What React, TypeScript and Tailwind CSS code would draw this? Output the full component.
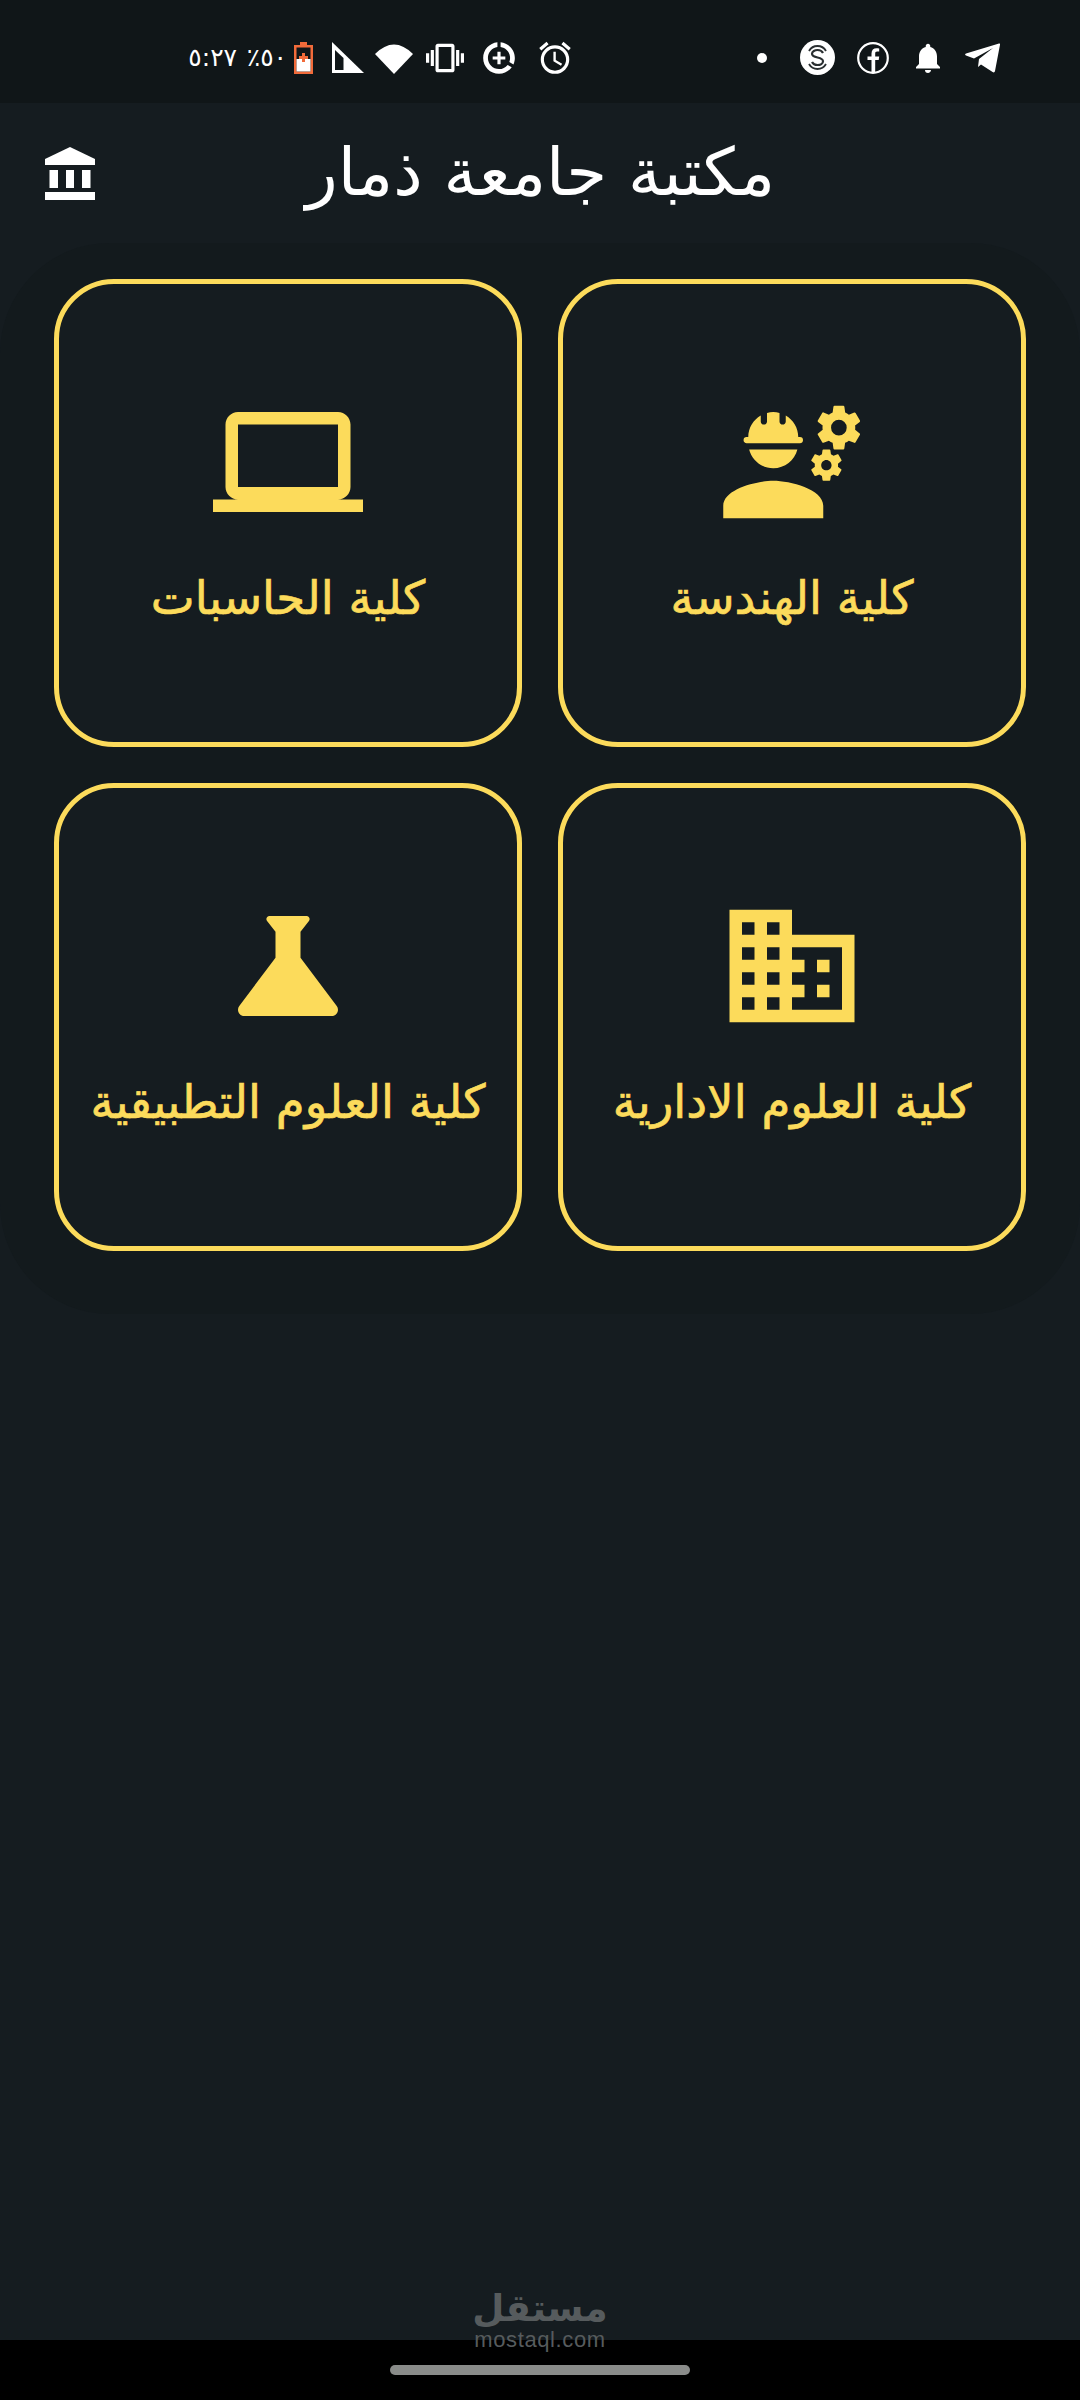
import {
  MdBusiness,
  MdDataSaverOn,
  MdEngineering,
  MdLaptop,
  MdNotifications,
  MdOutlineAlarm,
  MdScience,
  MdVibration,
} from "react-icons/md";
import type { ReactNode } from "react";

const faculties: { title: string; icon: ReactNode }[] = [
  { title: "كلية الهندسة", icon: <MdEngineering size={150} /> },
  { title: "كلية الحاسبات", icon: <MdLaptop size={150} /> },
  { title: "كلية العلوم الادارية", icon: <MdBusiness size={150} /> },
  { title: "كلية العلوم التطبيقية", icon: <MdScience size={150} /> },
];

function StatusBar() {
  return (
    <div className="flex h-[103px] items-center bg-[#101618] pl-[189px] pt-[12px] text-white">
      <span dir="rtl" className="w-[48px] text-[25px] leading-none">٥:٢٧</span>
      <span dir="rtl" className="ml-[14px] w-[36px] text-[25px] leading-none">٥٠٪</span>

      {/* Battery */}
      <svg viewBox="0 0 19 32" className="ml-[7px] h-[32px] w-[19px]">
        <path d="M6 0h7v3h6v29H0V3h6z" fill="#f26b3a" />
        <rect x="2.5" y="5.5" width="14" height="24" fill="#101618" />
        <rect x="2.5" y="17" width="14" height="12.5" fill="#fff" />
        <path d="M8 11h3v3h3v3h-3v3H8v-3H5v-3h3z" fill="#f26b3a" />
      </svg>

      {/* Signal */}
      <svg viewBox="0 0 32 31" className="ml-[19px] h-[31px] w-[32px]">
        <path d="M0 0l32 31H0z" fill="#fff" />
        <path d="M3 8v20h8.5V16z" fill="#101618" />
      </svg>

      {/* Wifi */}
      <svg viewBox="0 0 38 32" className="ml-[11px] h-[32px] w-[38px]">
        <path d="M0 12Q19-7 38 12L19 32z" fill="#fff" />
      </svg>

      <MdVibration size={38} className="ml-[13px]" />
      <MdDataSaverOn size={38} className="ml-[16px]" />
      <MdOutlineAlarm size={38} className="ml-[18px]" />

      <span className="ml-[183px] h-[10px] w-[10px] rounded-full bg-white" />

      {/* Sweatcoin style logo */}
      <svg viewBox="0 0 35 35" className="ml-[33px] h-[35px] w-[35px]">
        <circle cx="17.5" cy="17.5" r="17.5" fill="#fff" />
        <path d="M23 13c-1-2-3-3-5.500-3S12 11.500 12 13.800c0 5 11 2.500 11 7.400 0 2.300-2.500 3.800-5.500 3.800S13 24 12 22" fill="none" stroke="#2a2f31" strokeWidth="2.200" />
        <path d="M9 11c2-3.500 5-5 8.500-5S24 7.500 26 11M9 24c2 3.500 5 5 8.500 5s6.500-1.500 8.500-5" fill="none" stroke="#2a2f31" strokeWidth="1.800" />
      </svg>

      {/* Facebook outline */}
      <svg viewBox="0 0 32 32" className="ml-[22px] h-[32px] w-[32px]">
        <circle cx="16" cy="16" r="14.800" fill="none" stroke="#fff" strokeWidth="2.200" />
        <path d="M14.500 31V18h-4v-3.500h4V11.500c0-3.500 2-5.300 5-5.300 1.300 0 2.300.1 2.700.2v3.200h-2c-1.600 0-2 .8-2 2v2.900h4l-.5 3.500h-3.500v13z" fill="#fff" />
      </svg>

      <MdNotifications size={36} className="ml-[21px]" />

      {/* Telegram */}
      <svg viewBox="0 0 35 30" className="ml-[19px] h-[30px] w-[35px]">
        <path d="M34 0.500c.8-.2 1.300.4 1 1.300L30 28c-.2 1.300-1.300 1.800-2.400 1L16 21.500l-3 2.500 1-8L28 5 9 15.500 1 12.500c-1.200-.5-1.200-1.500 0-2z" fill="#fff" />
      </svg>
    </div>
  );
}

function Header() {
  return (
    <div className="flex h-[140px] items-center justify-between pl-[45px] pr-[305px]">
      <svg viewBox="0 0 50 53" className="h-[53px] w-[50px]" fill="#fff">
        <path d="M25 0l25 12v6H0v-6z" />
        <path d="M4.500 23H13v18H4.500zM21 23h8v18h-8zM37 23h8.500v18H37zM0 45h50v8H0z" />
      </svg>
      <h1 dir="rtl" className="text-[66px] leading-none text-white">مكتبة جامعة ذمار</h1>
    </div>
  );
}

function FacultyCard({ title, icon }: { title: string; icon: ReactNode }) {
  return (
    <div className="flex h-[468px] flex-col items-center justify-center rounded-[60px] border-[5px] border-[#fcdb5b] bg-[#151c20] pb-[11px] text-[#fcdb5b]">
      {icon}
      <span dir="rtl" className="mt-[31px] text-[46.7px] leading-[60px] [-webkit-text-stroke:0.7px_#fcdb5b]">{title}</span>
    </div>
  );
}

export default function App() {
  return (
    <main
      className="relative flex h-[2400px] w-[1080px] flex-col overflow-hidden bg-[#151c20]"
      style={{ fontFamily: '"DejaVu Sans", "Noto Sans", serif' }}
    >
      <StatusBar />
      <Header />

      {/* Faculties */}
      <div className="grid grid-cols-2 gap-[36px] rounded-[110px] bg-[#131a1d] px-[54px] pb-[63px] pt-[36px] [direction:rtl]">
        {faculties.map((f) => (
          <FacultyCard key={f.title} title={f.title} icon={f.icon} />
        ))}
      </div>

      {/* Nav bar */}
      <div className="mt-auto flex h-[60px] items-start justify-center bg-black pt-[25px]">
        <div className="h-[10px] w-[300px] rounded-full bg-[#8a8c8a]" />
      </div>

      {/* Watermark */}
      <div className="absolute left-[465px] top-[2284px] flex w-[150px] flex-col items-center text-[#565b5d]">
        <span dir="rtl" className="text-[37px] font-bold leading-[50px]">مستقل</span>
        <span className="-mt-[4px] text-[22px] leading-[20px] tracking-[0.6px]" style={{ fontFamily: '"Liberation Sans", sans-serif' }}>mostaql.com</span>
      </div>
    </main>
  );
}
